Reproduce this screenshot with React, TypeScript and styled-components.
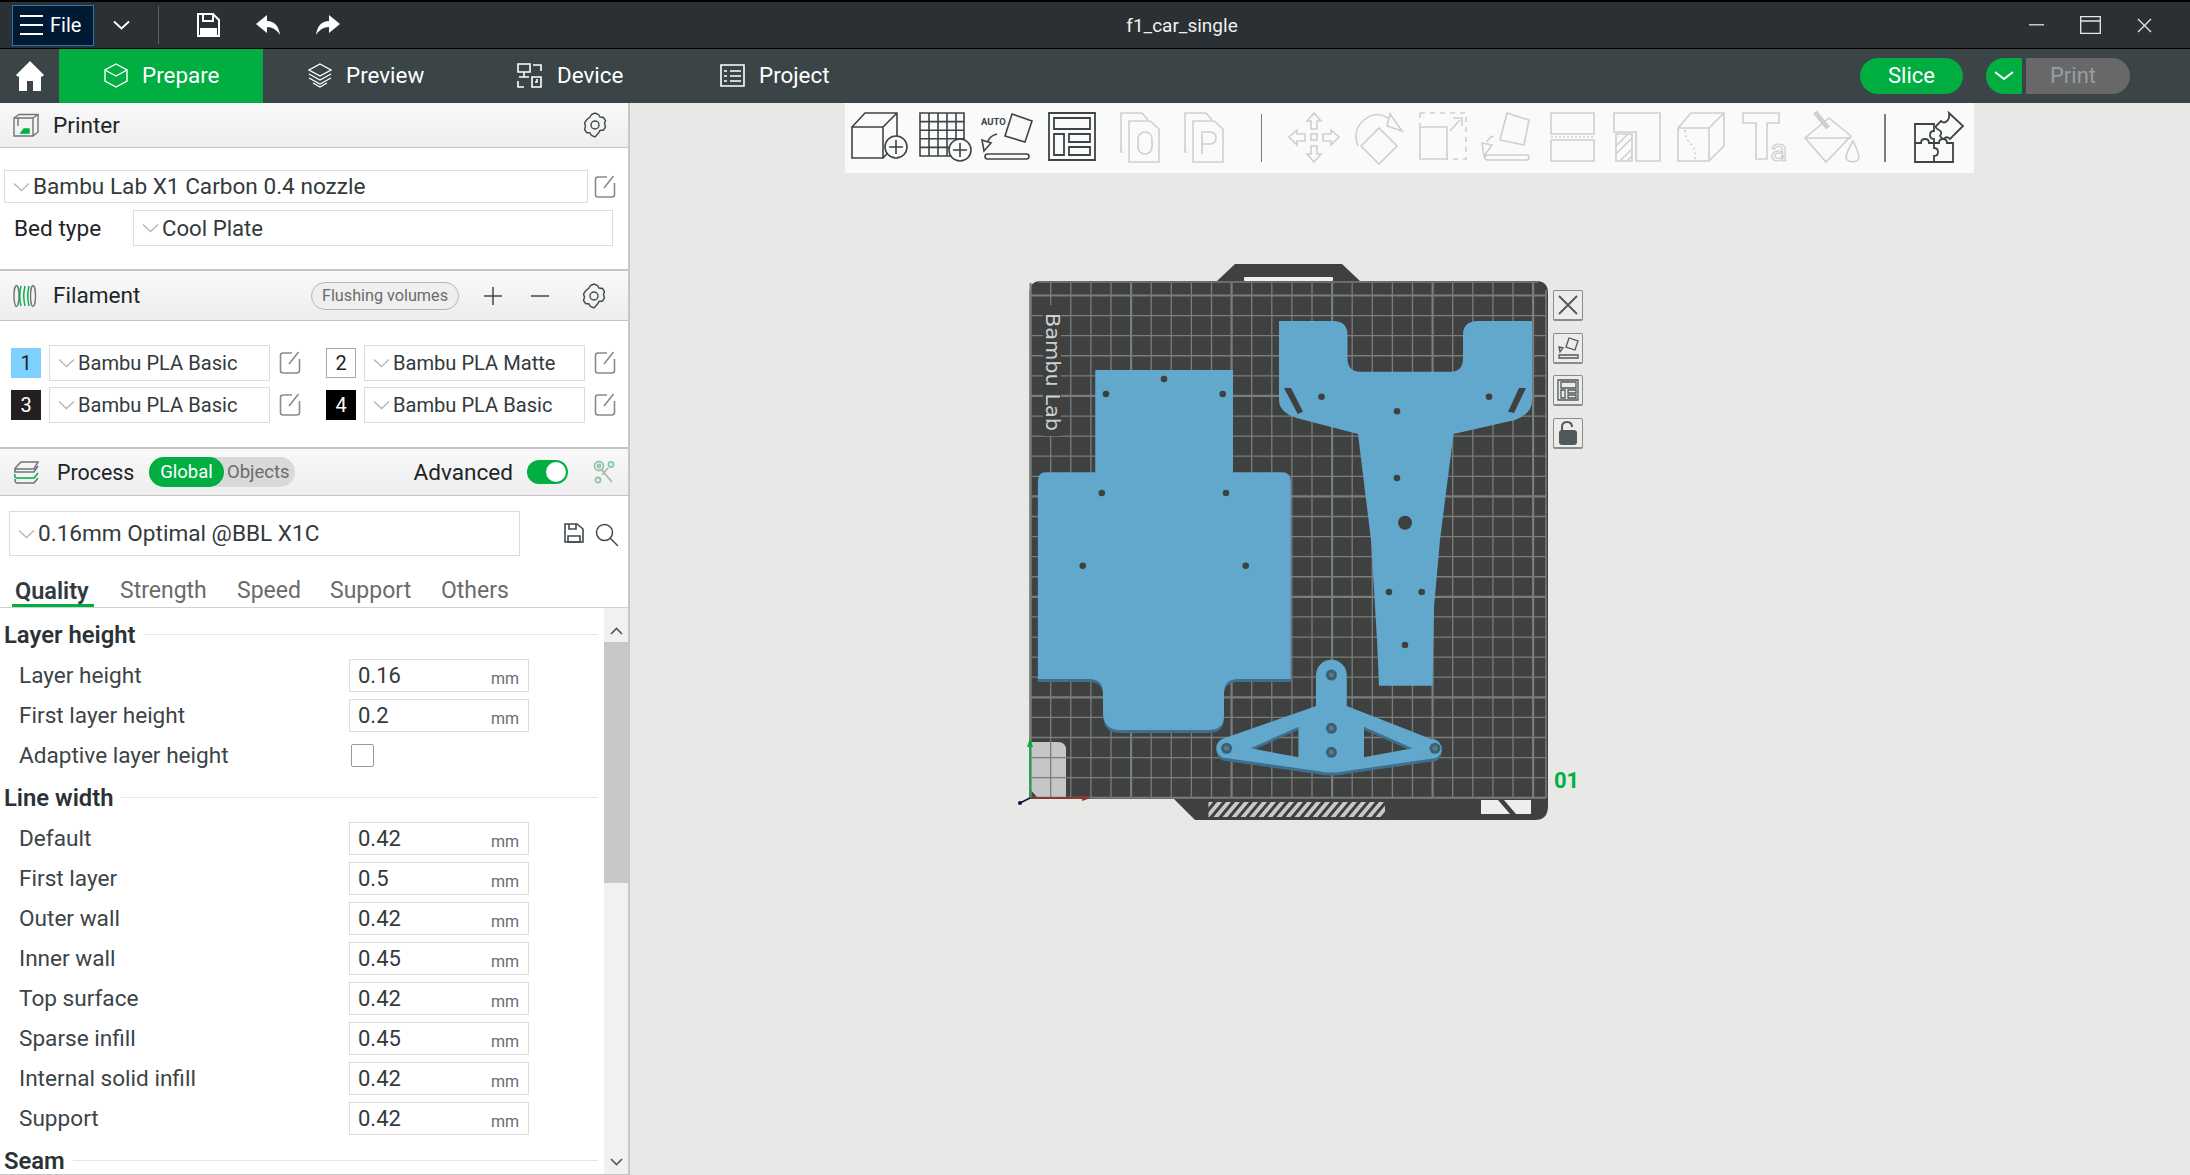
import * as React from "react";
import styled, { createGlobalStyle } from "styled-components";

const Green = "#00ae42";
const Dark = "#3c4447";
const Faded = "#cfcfcf";
const Plate = "#3f4141";
const Part = "#62a8cc";
const PartEdge = "#3f6f8e";

const GlobalStyle = createGlobalStyle`
	html, body {
		margin: 0;
		padding: 0;
		background: #e8e8e6;
		font-family: Roboto, "Noto Sans", sans-serif;
		color: #2b3235;
	}
	* {
		box-sizing: border-box;
	}
`;

const Window = styled.div`
	width: 2190px;
	height: 1175px;
	display: flex;
	flex-direction: column;
	overflow: hidden;
`;

const TitleBar = styled.div`
	height: 49px;
	flex: none;
	display: flex;
	align-items: center;
	position: relative;
	background: #2a3033;
	border-top: 2px solid #000;
	border-bottom: 1px solid #000;
	color: #fff;
`;

const FileButton = styled.div`
	width: 82px;
	height: 41px;
	margin-left: 12px;
	padding-left: 7px;
	display: flex;
	align-items: center;
	gap: 7px;
	background: #011a33;
	border: 1px solid #2a74b0;
	font-size: 20px;
`;

const TitleSeparator = styled.div`
	width: 1px;
	height: 38px;
	margin: 0 29px 0 9px;
	background: #596164;
`;

const TitleIcon = styled.div<{ $width: number }>`
	width: ${(p) => p.$width}px;
	display: flex;
	justify-content: center;
	align-items: center;
`;

const TitleText = styled.div`
	position: absolute;
	left: 174px;
	right: 0;
	text-align: center;
	font-size: 19px;
	color: #f0f0f0;
`;

const WindowButtons = styled.div`
	margin-left: auto;
	display: flex;
	align-items: center;
	gap: 36px;
	padding-right: 38px;
`;

const TabBar = styled.div`
	height: 54px;
	flex: none;
	display: flex;
	background: #3b4446;
	color: #fff;
`;

const HomeBox = styled.div`
	width: 59px;
	display: flex;
	align-items: center;
	justify-content: center;
`;

const Tab = styled.div<{ $active?: boolean; $width: number }>`
	width: ${(p) => p.$width}px;
	padding: 0 0 2px 45px;
	display: flex;
	align-items: center;
	gap: 14px;
	font-size: 22.4px;
	background: ${(p) => (p.$active ? Green : "transparent")};
`;

const TabActions = styled.div`
	margin-left: auto;
	display: flex;
	align-items: center;
	padding-right: 60px;
`;

const SliceButton = styled.div`
	width: 103px;
	height: 36px;
	padding-bottom: 2px;
	border-radius: 18px;
	background: ${Green};
	font-size: 22px;
	display: flex;
	align-items: center;
	justify-content: center;
`;

const PrintArrow = styled.div`
	width: 36px;
	height: 36px;
	margin-left: 23px;
	border-radius: 18px 0 0 18px;
	background: ${Green};
	display: flex;
	align-items: center;
	justify-content: center;
`;

const PrintButton = styled.div`
	width: 104px;
	height: 36px;
	margin-left: 4px;
	padding: 0 10px 2px 0;
	border-radius: 0 18px 18px 0;
	background: #686868;
	color: #959ea3;
	font-size: 22px;
	display: flex;
	align-items: center;
	justify-content: center;
`;

const Main = styled.div`
	flex: 1;
	display: flex;
	min-height: 0;
`;

const Sidebar = styled.div`
	width: 630px;
	flex: none;
	display: flex;
	flex-direction: column;
	background: #fff;
	border-right: 2px solid #c6c6c6;
	border-bottom: 1px solid #c6c6c6;
`;

const SectionHeader = styled.div<{ $height: number }>`
	height: ${(p) => p.$height}px;
	flex: none;
	display: flex;
	align-items: center;
	position: relative;
	padding: 0 13px;
	background: linear-gradient(#f9f9f9, #eeeeee);
	border-bottom: 1px solid #c4c4c4;
	font-size: 22.6px;
	color: #1f2527;
`;

const HeaderLabel = styled.div<{ $left: number; $width?: number; $size?: number }>`
	margin-left: ${(p) => p.$left}px;
	width: ${(p) => (p.$width ? `${p.$width}px` : "auto")};
	font-size: ${(p) => p.$size || 22.6}px;
`;

const HeaderEnd = styled.div<{ $gap: number; $pad: number }>`
	margin-left: auto;
	display: flex;
	align-items: center;
	gap: ${(p) => p.$gap}px;
	padding-right: ${(p) => p.$pad}px;
`;

const PrinterBody = styled.div`
	height: 123px;
	flex: none;
	padding: 22px 0 0 4px;
	border-bottom: 2px solid #c4c4c4;
`;

const Row = styled.div<{ $top?: number }>`
	display: flex;
	align-items: center;
	margin-top: ${(p) => p.$top || 0}px;
`;

const Combo = styled.div<{ $width: number; $height: number; $size?: number }>`
	width: ${(p) => p.$width}px;
	height: ${(p) => p.$height}px;
	flex: none;
	display: flex;
	align-items: center;
	gap: 3px;
	padding-left: 8px;
	border: 1px solid #dcdcdc;
	background: #fff;
	font-size: ${(p) => p.$size || 22.6}px;
	color: #323a3d;
	white-space: nowrap;
`;

const BedLabel = styled.div`
	width: 129px;
	padding-left: 10px;
	font-size: 22.6px;
	color: #1f2527;
`;

const EditSlot = styled.div<{ $left: number }>`
	margin-left: ${(p) => p.$left}px;
	display: flex;
`;

const FlushButton = styled.div`
	width: 148px;
	height: 28px;
	border: 1px solid #b5b5b5;
	border-radius: 14px;
	background: #efefef;
	color: #6b6b6b;
	font-size: 16.2px;
	display: flex;
	align-items: center;
	justify-content: center;
`;

const FilamentGrid = styled.div`
	height: 128px;
	flex: none;
	display: grid;
	grid-template-columns: 315px 315px;
	grid-auto-rows: 36px;
	row-gap: 6px;
	padding: 24px 0 0 11px;
	border-bottom: 2px solid #c4c4c4;
`;

const FilamentCell = styled.div`
	display: flex;
	align-items: center;
`;

const Swatch = styled.div<{ $bg: string; $text: string; $bordered?: boolean }>`
	width: 30px;
	height: 30px;
	flex: none;
	margin-right: 8px;
	display: flex;
	align-items: center;
	justify-content: center;
	font-size: 20px;
	background: ${(p) => p.$bg};
	color: ${(p) => p.$text};
	border: ${(p) => (p.$bordered ? "1px solid #a8a8a8" : "none")};
`;

const ScopeToggle = styled.div`
	width: 146px;
	height: 30px;
	display: flex;
	align-items: center;
	border-radius: 15px;
	background: #d9d9d9;
	color: #6b6b6b;
	font-size: 18.5px;
`;

const ScopeActive = styled.div`
	width: 75px;
	height: 30px;
	margin-right: 3px;
	border-radius: 15px;
	background: ${Green};
	color: #fff;
	display: flex;
	align-items: center;
	justify-content: center;
`;

const Switch = styled.div`
	width: 41px;
	height: 24px;
	padding: 2px;
	margin-left: 14px;
	border-radius: 12px;
	background: ${Green};
	display: flex;
	justify-content: flex-end;
`;

const SwitchKnob = styled.div`
	width: 20px;
	height: 20px;
	border-radius: 50%;
	background: #fff;
`;

const PresetRow = styled.div`
	height: 60px;
	flex: none;
	padding: 15px 0 0 9px;
	display: flex;
	align-items: flex-start;
`;

const PresetIcons = styled.div`
	display: flex;
	gap: 11px;
	margin: 12px 0 0 44px;
`;

const TabsRow = styled.div`
	height: 52px;
	flex: none;
	display: flex;
	padding-left: 12px;
	border-bottom: 1px solid #d0d0d0;
`;

const SettingsTab = styled.div<{ $active?: boolean; $width: number }>`
	width: ${(p) => p.$width}px;
	height: 51px;
	padding: 21px 0 0 ${(p) => (p.$active ? 3 : 0)}px;
	font-size: ${(p) => (p.$active ? 23.5 : 23)}px;
	font-weight: ${(p) => (p.$active ? 600 : 400)};
	color: ${(p) => (p.$active ? "#323a3d" : "#6b6b6b")};
	box-shadow: ${(p) => (p.$active ? `inset 0 -3px 0 ${Green}` : "none")};
`;

const TabGap = styled.div<{ $width: number }>`
	width: ${(p) => p.$width}px;
	flex: none;
`;

const SettingsArea = styled.div`
	flex: 1;
	display: flex;
	min-height: 0;
`;

const SettingsList = styled.div`
	width: 604px;
	flex: none;
	overflow: hidden;
	padding: 4px 6px 0 4px;
`;

const GroupTitle = styled.div`
	height: 43px;
	padding-top: 2px;
	display: flex;
	align-items: center;
	gap: 8px;
	font-size: 23.8px;
	font-weight: 600;
	color: #2b3235;
	&::after {
		content: "";
		flex: 1;
		height: 1px;
		background: #e6e6e6;
	}
`;

const SettingRow = styled.div`
	height: 40px;
	display: flex;
	align-items: center;
	padding-left: 15px;
`;

const SettingLabel = styled.div`
	width: 330px;
	flex: none;
	font-size: 22.6px;
	color: #3c4447;
`;

const ValueBox = styled.div`
	width: 180px;
	height: 33px;
	display: flex;
	align-items: center;
	justify-content: space-between;
	padding: 0 9px 0 8px;
	border: 1px solid #dcdcdc;
	font-size: 22px;
	color: #323a3d;
`;

const Unit = styled.span`
	font-size: 16px;
	color: #6b6b6b;
	padding-top: 6px;
`;

const Checkbox = styled.div`
	width: 23px;
	height: 23px;
	margin-left: 2px;
	border: 1px solid #9a9a9a;
	border-radius: 2px;
	background: #fff;
`;

const Scrollbar = styled.div`
	width: 24px;
	flex: none;
	display: flex;
	flex-direction: column;
	background: #f1f1f1;
`;

const ScrollArrow = styled.div<{ $height: number; $top?: number }>`
	height: ${(p) => p.$height}px;
	flex: none;
	padding-top: ${(p) => p.$top || 0}px;
	display: flex;
	align-items: center;
	justify-content: center;
`;

const ScrollThumb = styled.div`
	height: 241px;
	flex: none;
	background: #c8c8c8;
`;

const ScrollSpace = styled.div`
	flex: 1;
`;

const Canvas = styled.div`
	flex: 1;
	position: relative;
	background: #e8e8e6;
	display: flex;
	justify-content: center;
	align-items: flex-start;
`;

const Toolbar = styled.div`
	position: relative;
	width: 1129px;
	height: 70px;
	margin-right: 2px;
	padding-left: 2px;
	display: flex;
	align-items: center;
	background: #fafafa;
	z-index: 1;
`;

const Tool = styled.div<{ $left?: number; $width?: number }>`
	width: ${(p) => p.$width || 64.5}px;
	flex: none;
	margin-left: ${(p) => p.$left || 0}px;
	display: flex;
	justify-content: center;
`;

const ToolSeparator = styled.div<{ $left: number }>`
	width: 1.5px;
	height: 48px;
	flex: none;
	margin-left: ${(p) => p.$left}px;
	background: #7c7c7c;
`;

const PlateDrawing = styled.svg`
	position: absolute;
	left: 0;
	top: 0;
`;

const PlateTools = styled.div`
	position: absolute;
	left: 923px;
	top: 187px;
	display: flex;
	flex-direction: column;
	gap: 11.5px;
`;

const PlateTool = styled.div`
	width: 30px;
	height: 31px;
	display: flex;
	align-items: center;
	justify-content: center;
	background: #ececea;
	border: 1px solid #8c8c8c;
	border-bottom-width: 2px;
	border-radius: 2px;
`;

const PlateNumber = styled.div`
	position: absolute;
	left: 924px;
	top: 665px;
	color: ${Green};
	font-size: 22px;
	font-weight: 700;
`;

const Chevron = ({ color = "#b4b4b4" }: { color?: string }) => (
	<svg width="17" height="10" viewBox="0 0 17 10" fill="none">
		<path d="M1 1.5 8.5 8.5 16 1.5" stroke={color} strokeWidth="1.3" />
	</svg>
);

const EditIcon = () => (
	<svg width="22" height="24" viewBox="0 0 22 24" fill="none" stroke="#8a8a8a" strokeWidth="1.6">
		<path d="M13 2H4Q1.500 2 1.500 4.500V19.500Q1.500 22 4 22H17.500Q20.500 22 20.500 19.500V8" />
		<path d="M10 13 19.500 1" />
	</svg>
);

const GearIcon = () => (
	<svg width="26" height="26" viewBox="0 0 26 26" fill="none" stroke="#3f4a4d" strokeWidth="1.4">
		<path d="M9.500 2.500 13 1l3.500 1.500 1.500 2.500 3.500.5 2 3-1 3 1 3.500-2 3-3.500.5-1.500 2.500L13 25l-3.500-1.500L8 21l-3.500-.5-2-3 1-3.500-1-3 2-3L8 5z" />
		<circle cx="13" cy="13" r="4" />
	</svg>
);

const PrinterIcon = () => (
	<svg width="26" height="24" viewBox="0 0 26 24" fill="none" stroke="#6f7578" strokeWidth="1.4">
		<path d="M1 5h19v18H1zM20 5l5-3.500V19l-5 4M1 5l5-3.500h19" />
		<path d="M5 5v8" />
		<path d="M8 20l3-4h5v4z" fill={Green} stroke={Green} />
	</svg>
);

const SpoolIcon = () => (
	<svg width="24" height="24" viewBox="0 0 24 24" fill="none" strokeWidth="1.4">
		<ellipse cx="3.500" cy="12" rx="2.500" ry="10.500" stroke="#6f7578" />
		<ellipse cx="20" cy="12" rx="2.500" ry="10.500" stroke="#6f7578" />
		<path d="M8 2Q5.500 12 8 22M12 2Q9.500 12 12 22M16 2Q13.500 12 16 22" stroke={Green} />
	</svg>
);

const StackIcon = () => (
	<svg width="26" height="24" viewBox="0 0 26 24" fill="none" strokeWidth="1.6">
		<path d="M8 2h17l-4 7H2Q1 9 8 2z" stroke="#6f7578" />
		<path d="M2 9v3l4 0h15l4-6" stroke="#6f7578" />
		<path d="M2 14q-1 4 2 4h17l4-5" stroke={Green} />
		<path d="M2 19q0 4 2 4h17l4-5" stroke="#6f7578" />
	</svg>
);

const AdvancedIcon = () => (
	<svg width="22" height="24" viewBox="0 0 22 24" fill="none" stroke="#8fc7a6" strokeWidth="1.8">
		<circle cx="6" cy="6" r="4.500" />
		<circle cx="6" cy="6" r="1.500" />
		<circle cx="18" cy="4.500" r="2.500" />
		<circle cx="5" cy="20" r="2.500" />
		<path d="M8 9l11 13M15 8l-6 7" stroke="#a9b8b0" />
	</svg>
);

const SaveIcon = ({ color = "#3f4a4d", size = 20 }: { color?: string; size?: number }) => (
	<svg width={size} height={size} viewBox="0 0 20 20" fill="none" stroke={color} strokeWidth="1.6">
		<path d="M1 1h12l6 5v13H1z" />
		<path d="M5 1v5h7V1M4 13h12v6H4z" />
	</svg>
);

const SearchIcon = () => (
	<svg width="24" height="24" viewBox="0 0 24 24" fill="none" stroke="#3f4a4d" strokeWidth="1.5">
		<circle cx="9.500" cy="9.500" r="8" />
		<path d="M15 15 23 23" />
	</svg>
);

const PrepareIcon = () => (
	<svg width="24" height="25" viewBox="0 0 24 25" fill="none" stroke="#fff" strokeWidth="1.4">
		<path d="M12 1 23 7v11l-11 6-11-6V7z" />
		<path d="M1 7l11 6 11-6" />
	</svg>
);

const PreviewIcon = () => (
	<svg width="24" height="25" viewBox="0 0 24 25" fill="none" stroke="#fff" strokeWidth="1.4">
		<path d="M12 1 23 7 12 13 1 7z" />
		<path d="M1 11l11 6 11-6M1 15l11 6 11-6M5 20l7 4 7-4" />
	</svg>
);

const DeviceIcon = () => (
	<svg width="26" height="25" viewBox="0 0 26 25" fill="none" stroke="#fff" strokeWidth="1.6">
		<path d="M1 1h12v8H1zM7 9v5M2 14h10M16 2h8v6M1 18v6h6M15 14h9v10h-9zM20 16v3h-2" />
	</svg>
);

const ProjectIcon = () => (
	<svg width="25" height="23" viewBox="0 0 25 23" fill="none" stroke="#fff" strokeWidth="1.6">
		<path d="M1 1h23v21H1zM4 7h3M10 7h11M4 12h3M10 12h11M4 17h3M10 17h11" />
	</svg>
);

const HomeIcon = () => (
	<svg width="28" height="30" viewBox="0 0 28 30" fill="#fff">
		<path d="M14 0 28 14l-1.500 1.500H25V30H17V20H11V30H3V15.500H1.500L0 14z" />
	</svg>
);

const ToolIcon = ({ color, children }: { color: string; children: React.ReactNode }) => (
	<svg width="58" height="64" viewBox="0 -6 58 64" fill="none" stroke={color} strokeWidth="1.6">
		{children}
	</svg>
);

const AddBadge = ({ cx, cy, color }: { cx: number; cy: number; color: string }) => (
	<g>
		<circle cx={cx} cy={cy} r="11" fill="#fafafa" />
		<path d={`M${cx - 7} ${cy}H${cx + 7}M${cx} ${cy - 7}V${cy + 7}`} stroke={color} />
	</g>
);

const TiltedSquare = () => <path d="M26 24 33 2 53 9 46 30z" />;

const ToolList: { color: string; left?: number; width?: number; body: React.ReactNode; sepLeft?: number }[] = [
	{
		color: Dark,
		body: (
			<g>
				<path d="M2 15H33V46H2ZM2 15 15 1H47V31L33 46M33 15 47 1" />
				<AddBadge cx={46} cy={35} color={Dark} />
			</g>
		),
	},
	{
		color: Dark,
		body: (
			<g>
				<path d="M6 1H50V44H6ZM6 9.600H50M6 18.200H50M6 26.800H50M6 35.400H50M15 1V44M24 1V44M33 1V44M42 1V44" />
				<AddBadge cx={46} cy={38} color={Dark} />
			</g>
		),
	},
	{
		color: Dark,
		body: (
			<g>
				<TiltedSquare />
				<text x="2" y="13" fontSize="9.500" fontWeight="700" fill={Dark} stroke="none" fontFamily="Roboto, sans-serif">
					AUTO
				</text>
				<path d="M18 22Q11 24 9 29M3 28 12 31 5 39Z" />
				<rect x="6" y="42" width="44" height="5" rx="2.500" />
			</g>
		),
	},
	{
		color: Dark,
		body: (
			<g strokeWidth="1.8">
				<path d="M6 1H52V48H6ZM11 6H47V17H11ZM11 22H21V43H11ZM26 22H47V30H26ZM26 35H47V43H26Z" />
			</g>
		),
	},
	{
		color: Faded,
		left: 7,
		body: (
			<g>
				<path d="M8 40H6V1H27L33 8M14 9H35L44 17V50H14Z" />
				<rect x="23" y="20" width="14" height="22" rx="7" />
			</g>
		),
	},
	{
		color: Faded,
		body: (
			<g>
				<path d="M8 40H6V1H27L33 8M14 9H35L44 17V50H14Z" />
				<path d="M23 42V20H31Q37 20 37 26 37 32 31 32H23" />
			</g>
		),
	},
	{
		color: Faded,
		left: 20,
		sepLeft: 20,
		body: (
			<g>
				<path d="M29 1 36 9H32V17H26V9H22ZM29 50 36 42H32V34H26V42H22ZM4 25 12 18V22H20V29H12V33ZM54 25 46 18V22H38V29H46V33Z" />
				<rect x="26" y="22" width="6" height="6" />
			</g>
		),
	},
	{
		color: Faded,
		body: (
			<g>
				<path d="M29 16 47 34 29 52 11 34Z" />
				<path d="M8 34Q2 18 14 8T38 6" />
				<path d="M37 14 40 2 52 19Z" />
			</g>
		),
	},
	{
		color: Faded,
		body: (
			<g>
				<path d="M6 1H52V47H32M6 1V14" strokeDasharray="5 5" />
				<path d="M6 15H33V47H6ZM36 19 46 8M39 6H48V14" />
			</g>
		),
	},
	{
		color: Faded,
		body: (
			<g>
				<path d="M21 28 28 1 50 8 45 33Z" />
				<path d="M15 24Q10 25 8 30M3 31 13 33 5 44Z" />
				<rect x="6" y="43" width="44" height="5" rx="2.500" />
			</g>
		),
	},
	{
		color: Faded,
		body: (
			<g>
				<path d="M8 1H51V22H8ZM8 28H51V49H8Z" />
				<path d="M8 25H51" strokeDasharray="2 2" />
			</g>
		),
	},
	{
		color: Faded,
		body: (
			<g>
				<path d="M6 1H52V49H28V20H6Z" />
				<path d="M8 22H24V49H8ZM8 34 20 22M8 42 24 26M12 49 24 37M19 49 24 44" />
			</g>
		),
	},
	{
		color: Faded,
		body: (
			<g>
				<path d="M6 16 19 1H52V34L37 49H6ZM6 16H37V49M37 16 52 1" />
				<path d="M13 18Q14 28 19 32T23 49" strokeDasharray="2 3" />
			</g>
		),
	},
	{
		color: Faded,
		body: (
			<g>
				<path d="M6 1H42V11H30V47H19V11H6Z" />
				<text x="33" y="49" fontSize="32" fill="none" stroke={Faded} strokeWidth="1.200" fontFamily="Roboto, sans-serif">
					a
				</text>
			</g>
		),
	},
	{
		color: Faded,
		width: 65,
		body: (
			<g>
				<path d="M27 6 49 24 24 50 3 26Z" />
				<path d="M3 26H49" />
				<path d="M13 0 26 16" strokeWidth="5" />
				<path d="M51 29Q44 41 44 46A7 6 0 0 0 57 46Q57 41 51 29Z" />
			</g>
		),
	},
	{
		color: Dark,
		left: 21,
		sepLeft: 21,
		body: (
			<g strokeWidth="1.800">
				<path d="M5 12H24V19Q20 19 20 23T24 27V31H19Q19 27 15 27T11 31H5Z" />
				<path d="M5 31V50H24V44Q28 44 28 40T24 36V31" />
				<path d="M24 31H29Q29 27 33 27T37 31H43V50H24" />
				<path d="M39 1 53 14 40 27Q37 24 35 26T30 24Q33 20 29 18T26 14L31 9Q34 12 37 9T39 1Z" />
			</g>
		),
	},
];

const xLines = Array.from({ length: 26 }, (_, i) => 1030.6 + i * 20.1);
const yLines = Array.from({ length: 26 }, (_, i) => 295.5 + i * 20.09);

const PartAPath =
	"M1095.3 370H1233V472.3H1282Q1290.8 472.3 1290.8 481V679H1238Q1224 679 1224 693V716Q1224 730 1208 730H1121Q1103 730 1103 712V693Q1103 679 1089 679H1037.9V481Q1037.9 472.3 1046 472.3H1095.3Z";

const PartBPath =
	"M1279 321H1333Q1347.500 321 1347.500 335V358Q1347.500 371.700 1360 371.700H1451Q1463 371.700 1463 358V335Q1463 321 1478 321H1532V400Q1532 414 1515 420L1453.500 434 1440 540 1434 607 1432.500 685.700H1379L1377 640 1371 540 1358 434 1296.600 418Q1279 412 1279 400Z";

const PartCPath =
	"M1316 675A15.300 15.300 0 0 1 1346.700 675V706L1431 739A10 10 0 0 1 1436 758L1346 771Q1331 774 1317 771L1226 758A10 10 0 0 1 1222 739L1316 706ZM1298.500 726.700 1250.700 748.300 1298.500 757.300ZM1364 726.700V757.300L1412.500 748.300Z";

const SmallHoles = [
	[1164, 379], [1106, 394], [1222.7, 394], [1101.8, 493], [1226, 493], [1082.7, 565.7], [1245.7, 565.7],
	[1321.5, 396.7], [1489, 396.7], [1397, 411.3], [1397, 478], [1389, 592], [1421.7, 592], [1405, 645],
];

const BoltHoles = [
	[1331.4, 675], [1331.4, 728.3], [1331.4, 752.3], [1226.6, 748.3], [1435, 748.3],
];

const PlateView = () => (
	<PlateDrawing width="1558" height="1072" viewBox="630 103 1558 1072">
		<path
			d="M1029.500 293Q1029.500 281 1041 281H1217L1235 264H1342L1360 281H1536Q1548 281 1548 293V806Q1548 820 1535 820H1195L1174 799H1029.500Z"
			fill={Plate}
		/>
		<path d="M1030.600 742H1058Q1066 742 1066 750V798H1038L1030.600 790Z" fill="#c5c6c6" />
		<g stroke="#7b7d7c">
			{xLines.map((x, i) => (
				<line key={x} x1={x} x2={x} y1="283" y2="798" strokeWidth={i % 5 === 0 ? 2.2 : 1.3} />
			))}
			<line x1="1546" x2="1546" y1="290" y2="798" strokeWidth="1.500" />
			{yLines.map((y, i) => (
				<line key={y} x1="1030.600" x2="1546" y1={y} y2={y} strokeWidth={i % 5 === 0 ? 2.2 : 1.3} />
			))}
			<path d="M1038 282H1538" strokeWidth="1.500" />
		</g>
		<rect x="1043" y="305" width="18" height="131" fill={Plate} />
		<text
			transform="translate(1046 313) rotate(90)"
			fontSize="19"
			fill="#cfcfcf"
			fontFamily="'DejaVu Sans', sans-serif"
			textLength="118"
			lengthAdjust="spacingAndGlyphs"
		>
			Bambu Lab
		</text>
		<rect x="1244" y="277" width="89" height="4" rx="1" fill="#eeeeee" />
		<defs>
			<pattern id="hatch" width="9" height="15" patternUnits="userSpaceOnUse" patternTransform="skewX(-40)">
				<rect width="5" height="15" fill="#c9c9c9" />
			</pattern>
		</defs>
		<rect x="1208.500" y="802" width="176.500" height="15" fill="url(#hatch)" />
		<path d="M1481 800H1498L1510 814H1481ZM1504 800H1531V814H1516Z" fill="#eeeeee" />

		<path d={PartAPath} fill={PartEdge} transform="translate(0 3)" />
		<path d={PartAPath} fill={Part} />
		<path d={PartBPath} fill={Part} />
		<path d={PartCPath} fill={PartEdge} fillRule="evenodd" transform="translate(0 3)" />
		<path d={PartCPath} fill={Part} fillRule="evenodd" />

		{SmallHoles.map(([x, y]) => (
			<circle key={`${x}-${y}`} cx={x} cy={y} r="3.300" fill={Plate} />
		))}
		<circle cx="1405" cy="522.700" r="7" fill={Plate} />
		<path d="M1284 388H1291L1303 411.700 1297.700 414ZM1519 388H1526L1514 413 1508 411.700Z" fill={Plate} />
		{BoltHoles.map(([x, y]) => (
			<g key={`${x}-${y}`}>
				<circle cx={x} cy={y} r="5.500" fill="#35607c" />
				<circle cx={x} cy={y} r="2.500" fill="#6d7477" />
			</g>
		))}

		<path d="M1030 798V746" stroke={Green} strokeWidth="1.500" />
		<path d="M1030 738 1033 747H1027Z" fill={Green} />
		<path d="M1030 798H1086" stroke="#8a3a30" strokeWidth="1.800" />
		<path d="M1091 798 1082 795V801Z" fill="#8a3a30" />
		<path d="M1030 798 1020 803" stroke="#0b1238" strokeWidth="1.500" />
		<circle cx="1020" cy="803" r="2" fill="#0b1238" />
	</PlateDrawing>
);

const SettingValue = ({ label, value }: { label: string; value: string }) => (
	<SettingRow>
		<SettingLabel>{label}</SettingLabel>
		<ValueBox>
			{value}
			<Unit>mm</Unit>
		</ValueBox>
	</SettingRow>
);

const LineWidths = [
	["Default", "0.42"],
	["First layer", "0.5"],
	["Outer wall", "0.42"],
	["Inner wall", "0.45"],
	["Top surface", "0.42"],
	["Sparse infill", "0.45"],
	["Internal solid infill", "0.42"],
	["Support", "0.42"],
];

const Filaments = [
	{ id: "1", bg: "#7ed0ff", text: "#1f2527", name: "Bambu PLA Basic" },
	{ id: "2", bg: "#ffffff", text: "#1f2527", name: "Bambu PLA Matte", bordered: true },
	{ id: "3", bg: "#231f20", text: "#ffffff", name: "Bambu PLA Basic" },
	{ id: "4", bg: "#000000", text: "#ffffff", name: "Bambu PLA Basic" },
];

export default function App() {
	return (
		<Window>
			<GlobalStyle />
			<TitleBar>
				<FileButton>
					<svg width="23" height="22" viewBox="0 0 23 22" stroke="#fff" strokeWidth="2">
						<path d="M0 2H23M0 11H23M0 20H23" />
					</svg>
					File
				</FileButton>
				<TitleIcon $width={55}>
					<svg width="17" height="10" viewBox="0 0 17 10" fill="none" stroke="#fff" strokeWidth="1.800">
						<path d="M1 1.500 8.500 8.500 16 1.500" />
					</svg>
				</TitleIcon>
				<TitleSeparator />
				<TitleIcon $width={40}>
					<svg width="23" height="24" viewBox="0 0 23 24" fill="none" stroke="#fff" strokeWidth="2">
						<path d="M1 1H16L22 7V23H1Z" />
						<path d="M6 1V8H16V1" />
						<path d="M4 16H19V23H4Z" fill="#fff" />
					</svg>
				</TitleIcon>
				<TitleIcon $width={80}>
					<svg width="24" height="20" viewBox="0 0 24 20" fill="#fff">
						<path d="M0 9 11 0V6Q22 6 24 20 19 12 11 12V18Z" />
					</svg>
				</TitleIcon>
				<TitleIcon $width={40}>
					<svg width="24" height="20" viewBox="0 0 24 20" fill="#fff">
						<path d="M24 9 13 0V6Q2 6 0 20 5 12 13 12V18Z" />
					</svg>
				</TitleIcon>
				<TitleText>f1_car_single</TitleText>
				<WindowButtons>
					<svg width="15" height="2" viewBox="0 0 15 2" fill="#c8c8c8">
						<rect width="15" height="1.500" />
					</svg>
					<svg width="21" height="18" viewBox="0 0 21 18" fill="none" stroke="#e8e8e8" strokeWidth="1.300">
						<path d="M.7.7H20.300V17.300H.7ZM.7 5H20.300" />
					</svg>
					<svg width="15" height="15" viewBox="0 0 15 15" fill="none" stroke="#e8e8e8" strokeWidth="1.300">
						<path d="M1 1 14 14M14 1 1 14" />
					</svg>
				</WindowButtons>
			</TitleBar>
			<TabBar>
				<HomeBox>
					<HomeIcon />
				</HomeBox>
				<Tab $active $width={204}>
					<PrepareIcon />
					Prepare
				</Tab>
				<Tab $width={209}>
					<PreviewIcon />
					Preview
				</Tab>
				<Tab $width={203}>
					<DeviceIcon />
					Device
				</Tab>
				<Tab $width={204}>
					<ProjectIcon />
					Project
				</Tab>
				<TabActions>
					<SliceButton>Slice</SliceButton>
					<PrintArrow>
						<svg width="20" height="10" viewBox="0 0 20 10" fill="none" stroke="#fff" strokeWidth="2">
							<path d="M1 1 10 8 19 1" />
						</svg>
					</PrintArrow>
					<PrintButton>Print</PrintButton>
				</TabActions>
			</TabBar>
			<Main>
				<Sidebar>
					<SectionHeader $height={45}>
						<PrinterIcon />
						<HeaderLabel $left={14}>Printer</HeaderLabel>
						<HeaderEnd $gap={0} $pad={7}>
							<GearIcon />
						</HeaderEnd>
					</SectionHeader>
					<PrinterBody>
						<Row>
							<Combo $width={584} $height={33}>
								<Chevron />
								Bambu Lab X1 Carbon 0.4 nozzle
							</Combo>
							<EditSlot $left={6}>
								<EditIcon />
							</EditSlot>
						</Row>
						<Row $top={7}>
							<BedLabel>Bed type</BedLabel>
							<Combo $width={480} $height={36} $size={22.2}>
								<Chevron />
								Cool Plate
							</Combo>
						</Row>
					</PrinterBody>
					<SectionHeader $height={50}>
						<SpoolIcon />
						<HeaderLabel $left={16}>Filament</HeaderLabel>
						<HeaderEnd $gap={14} $pad={8}>
							<FlushButton>Flushing volumes</FlushButton>
							<svg width="40" height="20" viewBox="0 0 40 20" stroke="#3f4a4d" strokeWidth="1.500" fill="none">
								<path d="M20 1V19M11 10H29" />
							</svg>
							<svg width="40" height="20" viewBox="0 0 40 20" stroke="#3f4a4d" strokeWidth="1.500" fill="none">
								<path d="M4 10H22" />
							</svg>
							<GearIcon />
						</HeaderEnd>
					</SectionHeader>
					<FilamentGrid>
						{Filaments.map((f) => (
							<FilamentCell key={f.id}>
								<Swatch $bg={f.bg} $text={f.text} $bordered={f.bordered}>
									{f.id}
								</Swatch>
								<Combo $width={221} $height={36} $size={20.1}>
									<Chevron />
									{f.name}
								</Combo>
								<EditSlot $left={9}>
									<EditIcon />
								</EditSlot>
							</FilamentCell>
						))}
					</FilamentGrid>
					<SectionHeader $height={47}>
						<StackIcon />
						<HeaderLabel $left={18} $width={92} $size={21.4}>
							Process
						</HeaderLabel>
						<ScopeToggle>
							<ScopeActive>Global</ScopeActive>
							Objects
						</ScopeToggle>
						<HeaderEnd $gap={0} $pad={0}>
							Advanced
							<Switch>
								<SwitchKnob />
							</Switch>
							<EditSlot $left={25}>
								<AdvancedIcon />
							</EditSlot>
						</HeaderEnd>
					</SectionHeader>
					<PresetRow>
						<Combo $width={511} $height={45}>
							<Chevron />
							0.16mm Optimal @BBL X1C
						</Combo>
						<PresetIcons>
							<SaveIcon />
							<SearchIcon />
						</PresetIcons>
					</PresetRow>
					<TabsRow>
						<SettingsTab $active $width={82}>
							Quality
						</SettingsTab>
						<TabGap $width={26} />
						<SettingsTab $width={117}>Strength</SettingsTab>
						<SettingsTab $width={93}>Speed</SettingsTab>
						<SettingsTab $width={111}>Support</SettingsTab>
						<SettingsTab $width={90}>Others</SettingsTab>
					</TabsRow>
					<SettingsArea>
						<SettingsList>
							<GroupTitle>Layer height</GroupTitle>
							<SettingValue label="Layer height" value="0.16" />
							<SettingValue label="First layer height" value="0.2" />
							<SettingRow>
								<SettingLabel>Adaptive layer height</SettingLabel>
								<Checkbox />
							</SettingRow>
							<GroupTitle>Line width</GroupTitle>
							{LineWidths.map(([label, value]) => (
								<SettingValue key={label} label={label} value={value} />
							))}
							<GroupTitle>Seam</GroupTitle>
						</SettingsList>
						<Scrollbar>
							<ScrollArrow $height={34} $top={12}>
								<svg width="13" height="8" viewBox="0 0 13 8" fill="none" stroke="#50585b" strokeWidth="1.600">
									<path d="M1 7 6.500 1.500 12 7" />
								</svg>
							</ScrollArrow>
							<ScrollThumb />
							<ScrollSpace />
							<ScrollArrow $height={24}>
								<svg width="13" height="8" viewBox="0 0 13 8" fill="none" stroke="#50585b" strokeWidth="1.600">
									<path d="M1 1 6.500 6.500 12 1" />
								</svg>
							</ScrollArrow>
						</Scrollbar>
					</SettingsArea>
				</Sidebar>
				<Canvas>
					<PlateView />
					<Toolbar>
						{ToolList.map((t, i) => (
							<React.Fragment key={i}>
								{t.sepLeft && <ToolSeparator $left={t.sepLeft} />}
								<Tool $left={t.left} $width={t.width}>
									<ToolIcon color={t.color}>{t.body}</ToolIcon>
								</Tool>
							</React.Fragment>
						))}
					</Toolbar>
					<PlateTools>
						<PlateTool>
							<svg width="22" height="22" viewBox="0 0 22 22" stroke="#50585b" strokeWidth="1.800">
								<path d="M2 2 20 20M20 2 2 20" />
							</svg>
						</PlateTool>
						<PlateTool>
							<svg width="24" height="24" viewBox="0 0 24 24" fill="none" stroke="#50585b" strokeWidth="1.300">
								<path d="M10 11 13 2 22 5 19 14ZM3 11 7 12 4 16ZM3 19H22V22H3Z" />
							</svg>
						</PlateTool>
						<PlateTool>
							<svg width="24" height="24" viewBox="0 0 24 24" fill="none" stroke="#50585b" strokeWidth="1.300">
								<path d="M2 2H22V22H2ZM5 4H20V10H5ZM5 12H9V20H5ZM12 12H20V15H12ZM12 17H20V20H12Z" />
							</svg>
						</PlateTool>
						<PlateTool>
							<svg width="18" height="24" viewBox="0 0 18 24" fill="none" stroke="#50585b" strokeWidth="2">
								<path d="M3 10V6Q3 1 8 1T13 6" />
								<rect x="1" y="10" width="16" height="13" rx="2" fill="#50585b" />
							</svg>
						</PlateTool>
					</PlateTools>
					<PlateNumber>01</PlateNumber>
				</Canvas>
			</Main>
		</Window>
	);
}
